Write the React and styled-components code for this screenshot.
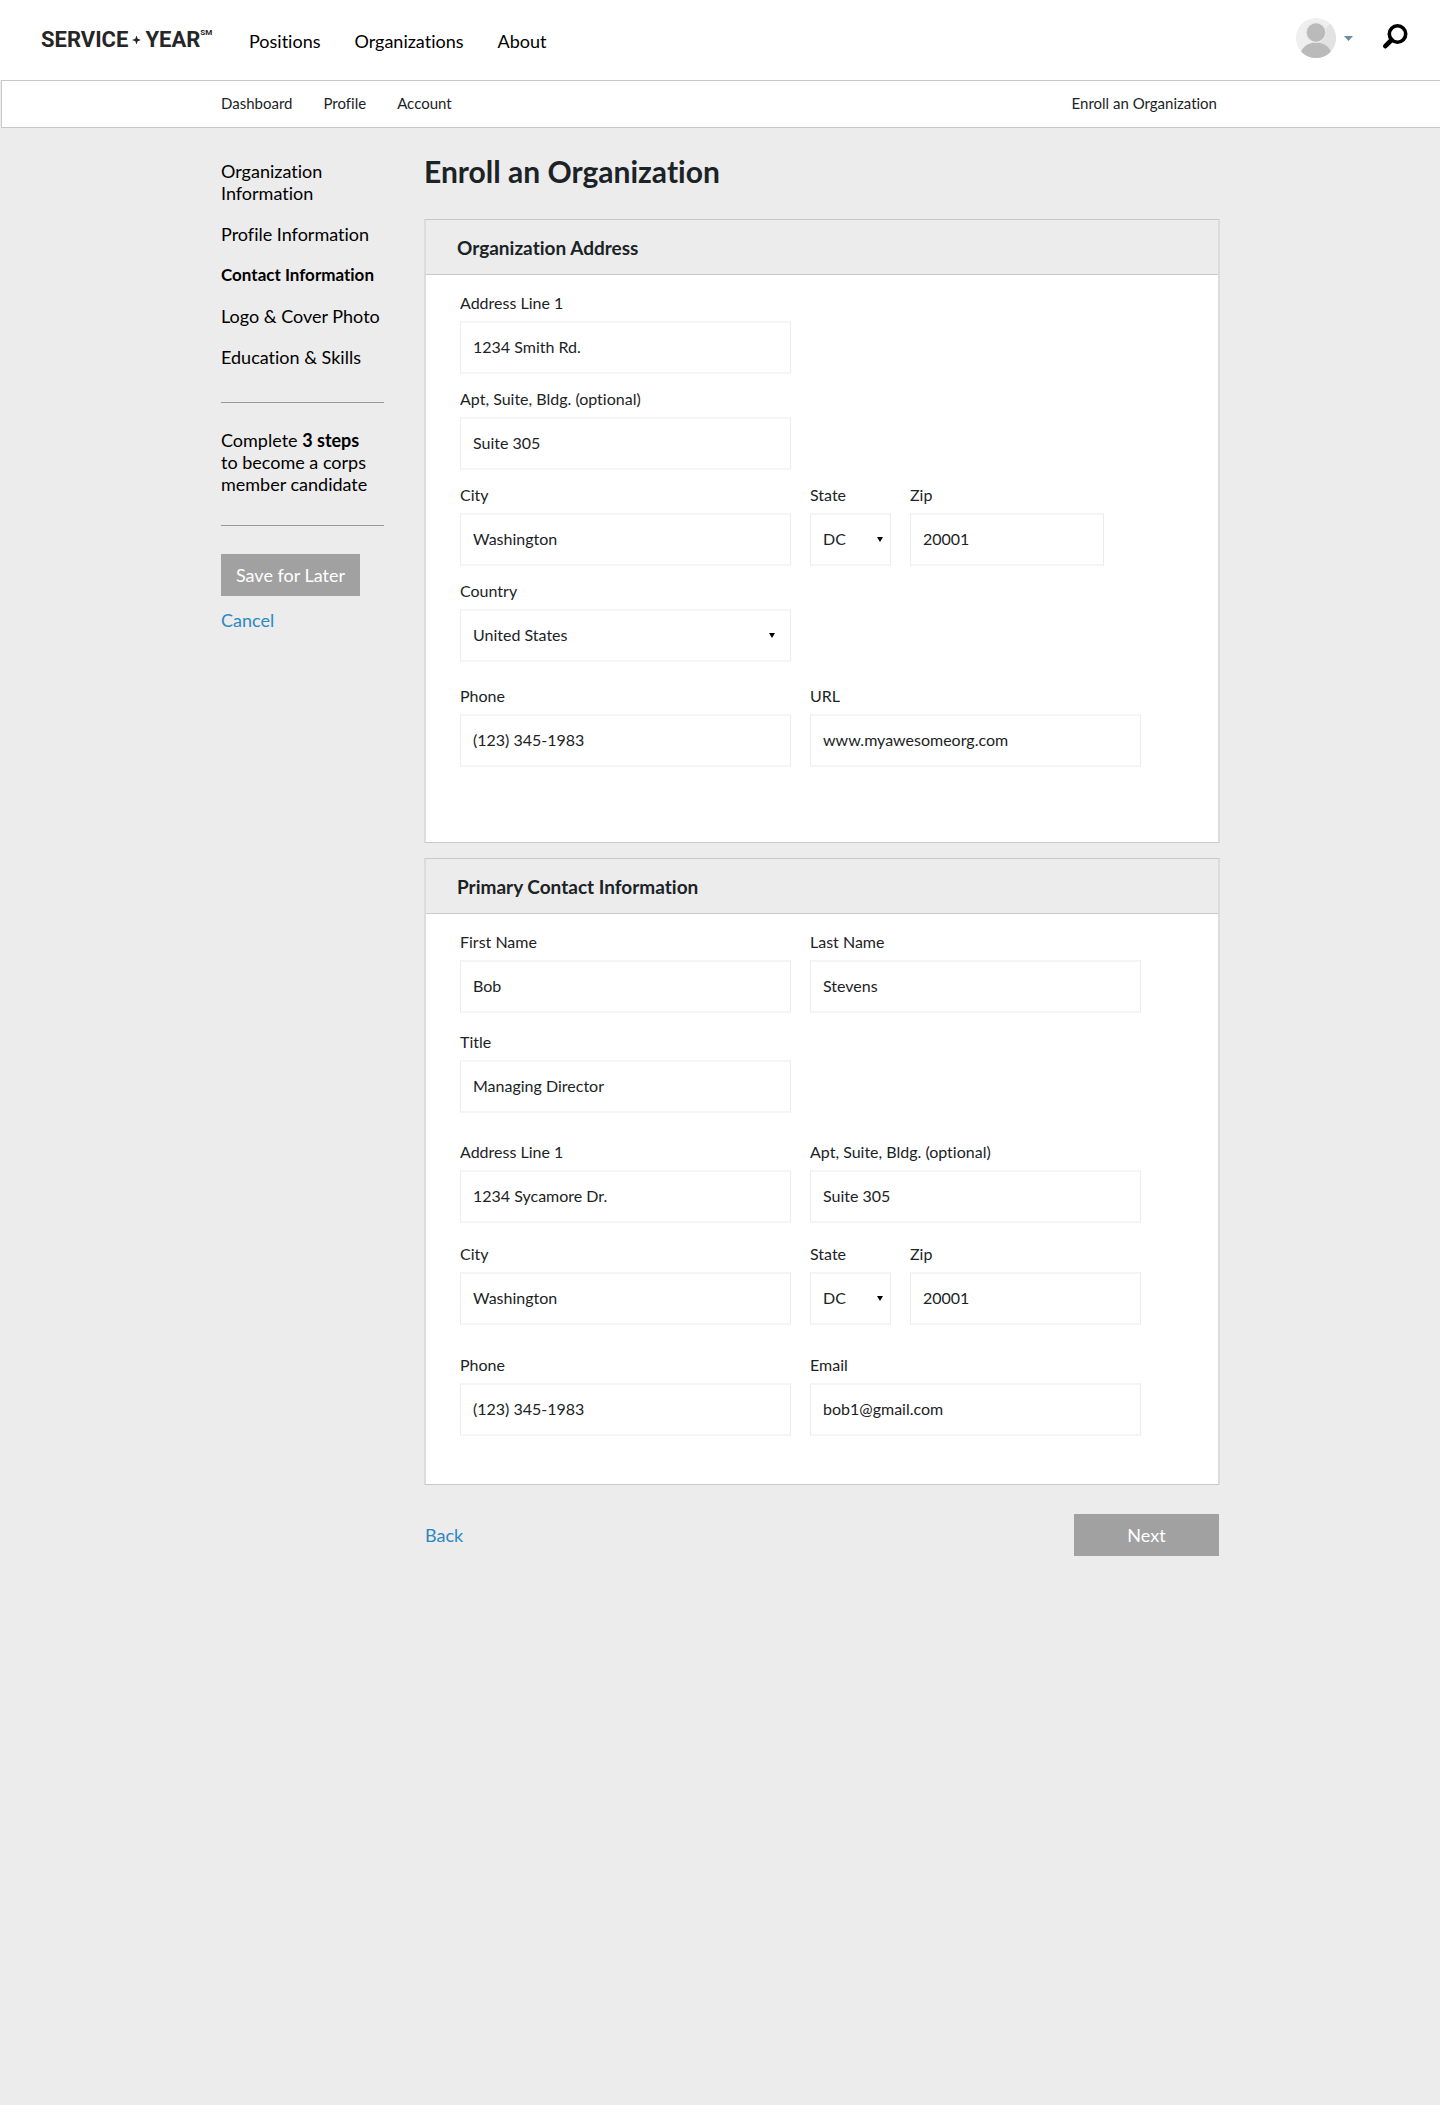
import React from "react";
import styled, { createGlobalStyle } from "styled-components";

const ink = "#1b2326";
const page = "#ececec";
const line = "#c9c9c9";

const GlobalStyle = createGlobalStyle`
  *, *::before, *::after { box-sizing: border-box; }
  body {
    margin: 0;
    background: ${page};
    color: ${ink};
    font-family: Lato, "Open Sans", sans-serif;
    font-size: 16px;
    font-variant-ligatures: none;
    line-height: 22px;
  }
  a { color: inherit; text-decoration: none; }
`;

const TopBar = styled.header`
  display: flex;
  align-items: center;
  height: 80px;
  padding: 0 32px 0 41px;
  background: #fff;
`;

const Logo = styled.a`
  display: flex;
  align-items: center;
  width: 171px;
  color: #262626;
  font-family: Roboto, "Liberation Sans", sans-serif;
  font-size: 22px;
  font-weight: 700;
  line-height: 28px;
  white-space: nowrap;
`;

const Star = styled.svg`
  flex: none;
  width: 9px;
  height: 10px;
  margin: 0 4px;
`;

const Mark = styled.sup`
  align-self: flex-start;
  font-size: 8px;
  line-height: 14px;
`;

const MainNav = styled.nav`
  display: flex;
  gap: 34px;
  margin-left: 37px;
  padding-top: 2px;
  color: #000;
  font-size: 18px;
  line-height: 24px;
`;

const Tools = styled.div`
  display: flex;
  align-items: flex-start;
  align-self: flex-start;
  margin-left: auto;
  padding-top: 18px;
`;

const IconButton = styled.button`
  display: flex;
  align-items: center;
  gap: 8px;
  padding: 0;
  border: 0;
  background: none;
  cursor: pointer;
`;

const SearchButton = styled(IconButton)`
  margin: 6px 0 0 29px;
`;

const SubBar = styled.div`
  margin-left: 1px;
  padding-right: 2px;
  border: 1px solid ${line};
  border-right: 0;
  background: #fff;
`;

const SubInner = styled.div`
  display: flex;
  justify-content: space-between;
  align-items: center;
  max-width: 998px;
  height: 46px;
  margin: 0 auto;
  padding: 0 2px 2px 0;
  font-size: 15px;
`;

const SubNav = styled.nav`
  display: flex;
  gap: 31px;
`;

const Layout = styled.div`
  display: grid;
  grid-template-columns: 165px minmax(0, 1fr);
  column-gap: 39px;
  max-width: 1000px;
  margin: 0 auto;
`;

const Sidebar = styled.aside`
  padding: 32px 1px 0;
  color: #000;
  font-size: 18px;
`;

const Steps = styled.nav`
  display: flex;
  flex-direction: column;
  gap: 19px;
`;

const StepLink = styled.a`
  font-weight: ${(p) => (p.$active ? 700 : 400)};
  font-size: ${(p) => (p.$active ? 17 : 18)}px;
`;

const Progress = styled.p`
  margin: 34px 0 28px;
  padding: 26px 0 30px;
  border: solid #999;
  border-width: 1px 0;
`;

const Button = styled.button`
  width: ${(p) => p.$width}px;
  height: 42px;
  padding: 0;
  border: 0;
  background: #a1a1a1;
  color: #fff;
  font: inherit;
  font-size: 18px;
  cursor: pointer;
`;

const TextLink = styled.a`
  display: ${(p) => (p.$block ? "block" : "inline")};
  margin-top: ${(p) => (p.$block ? "13px" : "0")};
  color: #2d87c3;
  font-size: 18px;
`;

const Main = styled.main`
  padding-top: 25px;
`;

const Title = styled.h1`
  margin: 0 0 30px;
  font-size: 30px;
  font-weight: 700;
  line-height: 36px;
`;

const Panel = styled.section`
  margin-bottom: 15px;
  border: solid ${line};
  border-width: 1px 2px;
  border-left-color: #dcdcdc;
  border-right-color: #dcdcdc;
  background: #fff;
`;

const PanelTitle = styled.h2`
  margin: 0;
  padding: 16px 31px 14px;
  border-bottom: 1px solid ${line};
  background: ${page};
  font-size: 19px;
  font-weight: 700;
  line-height: 24px;
`;

const PanelBody = styled.div`
  padding: 17px 77px ${(p) => p.$bottom}px 34px;
`;

const Row = styled.div`
  display: grid;
  grid-template-columns: 331fr 350fr;
  margin-top: ${(p) => p.$space || 0}px;
`;

const Half = styled.div`
  display: flex;
  gap: 19px;
  padding-left: ${(p) => (p.$second ? 19 : 0)}px;
  padding-right: ${(p) => p.$inset || 0}px;
`;

const FieldBox = styled.div`
  flex: ${(p) => (p.$width ? `0 0 ${p.$width}px` : "1")};
  min-width: 0;
`;

const Label = styled.label`
  display: block;
  margin-bottom: 7px;
`;

const control = `
  display: block;
  width: 100%;
  height: 53px;
  margin: 0;
  padding: 0 12px 2px;
  border: solid #ececec;
  border-width: 2px 1px;
  border-top-color: #f5f5f5;
  border-bottom-color: #f5f5f5;
  border-radius: 0;
  background: #fff;
  color: ${ink};
  font: inherit;
  font-variant-ligatures: none;
`;

const Input = styled.input`${control}`;

const Select = styled.select`
  ${control}
  appearance: none;
`;

const SelectWrap = styled.div`
  position: relative;

  &::after {
    content: "";
    position: absolute;
    top: 24px;
    right: ${(p) => p.$arrow}px;
    border: solid transparent;
    border-width: 5px 3px 0;
    border-top-color: #000;
    pointer-events: none;
  }
`;

const Footer = styled.div`
  display: flex;
  justify-content: space-between;
  align-items: center;
  padding: 14px 1px 40px;
`;

function Field({ id, label, value, width, type = "text" }) {
  return (
    <FieldBox $width={width}>
      <Label htmlFor={id}>{label}</Label>
      <Input id={id} type={type} defaultValue={value} />
    </FieldBox>
  );
}

function SelectField({ id, label, options, width, arrow = 8 }) {
  return (
    <FieldBox $width={width}>
      <Label htmlFor={id}>{label}</Label>
      <SelectWrap $arrow={arrow}>
        <Select id={id} defaultValue={options[0]}>
          {options.map((o) => (
            <option key={o}>{o}</option>
          ))}
        </Select>
      </SelectWrap>
    </FieldBox>
  );
}

function Avatar() {
  return (
    <svg width="40" height="40" viewBox="0 0 40 40" aria-hidden="true">
      <defs>
        <clipPath id="face">
          <circle cx="20" cy="20" r="20" />
        </clipPath>
      </defs>
      <g clipPath="url(#face)">
        <rect width="40" height="40" fill="#efefef" />
        <path d="M40 0v40H0z" fill="#e2e2e2" />
        <ellipse cx="20" cy="37" rx="15.500" ry="12.500" fill="#bababa" />
        <circle cx="20" cy="14.500" r="10.500" fill="#e9e9e9" />
        <circle cx="20" cy="14.500" r="9.200" fill="#bababa" />
      </g>
    </svg>
  );
}

export default function App() {
  return (
    <>
      <GlobalStyle />
      <TopBar>
        <Logo href="#home">
          SERVICE
          <Star viewBox="0 0 10 10" aria-hidden="true">
            <path d="M5 0l1.300 3.700L10 5 6.300 6.300 5 10 3.700 6.300 0 5l3.700-1.300z" fill="#262626" />
          </Star>
          YEAR
          <Mark>SM</Mark>
        </Logo>
        <MainNav>
          <a href="#positions">Positions</a>
          <a href="#organizations">Organizations</a>
          <a href="#about">About</a>
        </MainNav>
        <Tools>
          <IconButton type="button" aria-label="Account menu">
            <Avatar />
            <svg width="9" height="5" viewBox="0 0 9 5" aria-hidden="true">
              <path d="M0 0h9L4.500 5z" fill="#6b8c98" />
            </svg>
          </IconButton>
          <SearchButton type="button" aria-label="Search">
            <svg width="26" height="26" viewBox="0 0 26 26" fill="none" stroke="#000" aria-hidden="true">
              <circle cx="15.500" cy="10" r="8.200" strokeWidth="3.600" />
              <path d="M9.500 16l-6.200 6.200" strokeWidth="4.600" strokeLinecap="round" />
            </svg>
          </SearchButton>
        </Tools>
      </TopBar>

      <SubBar>
        <SubInner>
          <SubNav>
            <a href="#dashboard">Dashboard</a>
            <a href="#profile">Profile</a>
            <a href="#account">Account</a>
          </SubNav>
          <a href="#enroll">Enroll an Organization</a>
        </SubInner>
      </SubBar>

      <Layout>
        <Sidebar>
          <Steps>
            <StepLink href="#organization">Organization Information</StepLink>
            <StepLink href="#profile-info">Profile Information</StepLink>
            <StepLink href="#contact" $active>Contact Information</StepLink>
            <StepLink href="#logo">Logo &amp; Cover Photo</StepLink>
            <StepLink href="#education">Education &amp; Skills</StepLink>
          </Steps>
          <Progress>
            Complete <b>3 steps</b>
            <br />
            to become a corps
            <br />
            member candidate
          </Progress>
          <Button type="button" $width={139}>Save for Later</Button>
          <TextLink href="#cancel" $block>Cancel</TextLink>
        </Sidebar>

        <Main>
          <Title>Enroll an Organization</Title>

          <Panel>
            <PanelTitle>Organization Address</PanelTitle>
            <PanelBody $bottom={75}>
              <Row>
                <Half><Field id="org-line1" label="Address Line 1" value="1234 Smith Rd." /></Half>
              </Row>
              <Row $space={14}>
                <Half><Field id="org-line2" label="Apt, Suite, Bldg. (optional)" value="Suite 305" /></Half>
              </Row>
              <Row $space={14}>
                <Half><Field id="org-city" label="City" value="Washington" /></Half>
                <Half $second $inset={37}>
                  <SelectField id="org-state" label="State" options={["DC", "MD", "VA"]} width={81} />
                  <Field id="org-zip" label="Zip" value="20001" />
                </Half>
              </Row>
              <Row $space={14}>
                <Half>
                  <SelectField id="org-country" label="Country" options={["United States", "Canada"]} arrow={16} />
                </Half>
              </Row>
              <Row $space={23}>
                <Half><Field id="org-phone" label="Phone" value="(123) 345-1983" type="tel" /></Half>
                <Half $second><Field id="org-url" label="URL" value="www.myawesomeorg.com" /></Half>
              </Row>
            </PanelBody>
          </Panel>

          <Panel>
            <PanelTitle>Primary Contact Information</PanelTitle>
            <PanelBody $bottom={48}>
              <Row>
                <Half><Field id="first-name" label="First Name" value="Bob" /></Half>
                <Half $second><Field id="last-name" label="Last Name" value="Stevens" /></Half>
              </Row>
              <Row $space={18}>
                <Half><Field id="job-title" label="Title" value="Managing Director" /></Half>
              </Row>
              <Row $space={28}>
                <Half><Field id="line1" label="Address Line 1" value="1234 Sycamore Dr." /></Half>
                <Half $second><Field id="line2" label="Apt, Suite, Bldg. (optional)" value="Suite 305" /></Half>
              </Row>
              <Row $space={20}>
                <Half><Field id="city" label="City" value="Washington" /></Half>
                <Half $second>
                  <SelectField id="state" label="State" options={["DC", "MD", "VA"]} width={81} />
                  <Field id="zip" label="Zip" value="20001" />
                </Half>
              </Row>
              <Row $space={29}>
                <Half><Field id="phone" label="Phone" value="(123) 345-1983" type="tel" /></Half>
                <Half $second><Field id="email" label="Email" value="bob1@gmail.com" type="email" /></Half>
              </Row>
            </PanelBody>
          </Panel>

          <Footer>
            <TextLink href="#back">Back</TextLink>
            <Button type="submit" $width={145}>Next</Button>
          </Footer>
        </Main>
      </Layout>
    </>
  );
}
